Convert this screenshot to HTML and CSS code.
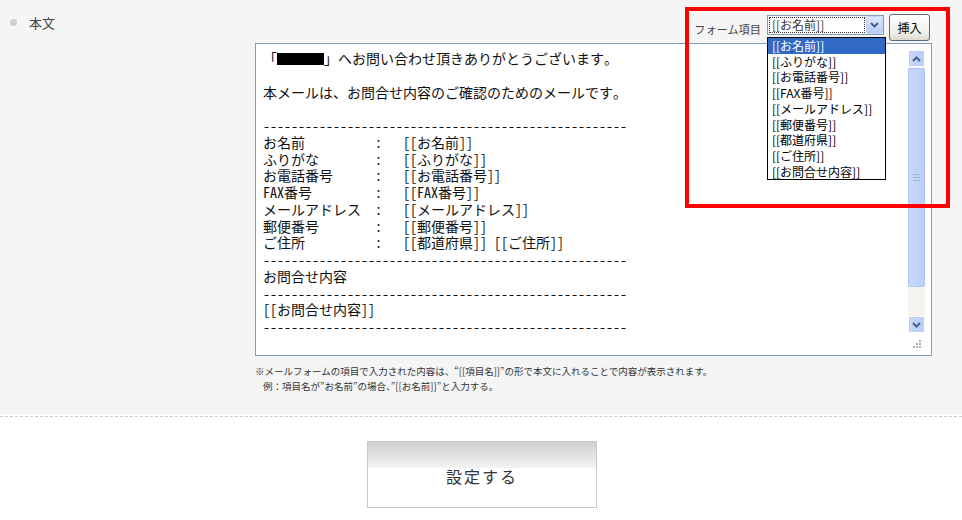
FILE: index.html
```html
<!DOCTYPE html>
<html lang="ja">
<head>
  <meta charset="UTF-8">
  <title>本文設定</title>
  <link rel="stylesheet" href="styles.css">
</head>
<body>

<div class="form-section">
  <div class="form-row">
    <div class="row-label"><span class="dot"></span>本文</div>

    <div class="row-body">
      <div class="toolbar">
        <span class="toolbar-label">フォーム項目</span>
        <div class="select">
          <span class="select-value">[[お名前]]</span>
          <span class="select-arrow">
            <svg width="9" height="6" viewBox="0 0 9 6"><path d="M1 1 L4.5 4.5 L8 1" fill="none" stroke="#4d6185" stroke-width="2"/></svg>
          </span>
          <ul class="select-list">
            <li class="selected">[[お名前]]</li>
            <li>[[ふりがな]]</li>
            <li>[[お電話番号]]</li>
            <li>[[FAX番号]]</li>
            <li>[[メールアドレス]]</li>
            <li>[[郵便番号]]</li>
            <li>[[都道府県]]</li>
            <li>[[ご住所]]</li>
            <li>[[お問合せ内容]]</li>
          </ul>
        </div>
        <button class="insert-btn">挿入</button>
      </div>

      <div class="editor">
        <div class="editor-text"><span class="open">「</span><span class="masked"></span>」へお問い合わせ頂きありがとうございます。

本メールは、お問合せ内容のご確認のためのメールです。

----------------------------------------------------
お名前          :   [[お名前]]
ふりがな        :   [[ふりがな]]
お電話番号      :   [[お電話番号]]
FAX番号         :   [[FAX番号]]
メールアドレス  :   [[メールアドレス]]
郵便番号        :   [[郵便番号]]
ご住所          :   [[都道府県]] [[ご住所]]
----------------------------------------------------
お問合せ内容
----------------------------------------------------
[[お問合せ内容]]
----------------------------------------------------</div>
        <div class="scrollbar">
          <div class="scroll-track">
            <div class="scroll-btn">
              <svg width="9" height="6" viewBox="0 0 9 6"><path d="M1 5 L4.5 1.5 L8 5" fill="none" stroke="#4d6185" stroke-width="2"/></svg>
            </div>
            <div class="scroll-thumb"><span class="grip"></span></div>
            <div class="scroll-rest"></div>
            <div class="scroll-btn">
              <svg width="9" height="6" viewBox="0 0 9 6"><path d="M1 1 L4.5 4.5 L8 1" fill="none" stroke="#4d6185" stroke-width="2"/></svg>
            </div>
          </div>
          <div class="resize-grip">
            <svg width="10" height="10" viewBox="0 0 10 10" fill="#b0b0b0">
              <rect x="7" y="1" width="2" height="2"/>
              <rect x="4" y="4" width="2" height="2"/><rect x="7" y="4" width="2" height="2"/>
              <rect x="1" y="7" width="2" height="2"/><rect x="4" y="7" width="2" height="2"/><rect x="7" y="7" width="2" height="2"/>
            </svg>
          </div>
        </div>
      </div>

      <p class="note">※メールフォームの項目で入力された内容は、“[[項目名]]”の形で本文に入れることで内容が表示されます。</p>
      <p class="note indent">例：項目名が”お名前”の場合、”[[お名前]]”と入力する。</p>
    </div>
  </div>

  <div class="highlight-box"></div>
</div>

<div class="actions">
  <button class="submit-btn">設定する</button>
</div>

</body>
</html>
```

FILE: styles.css
```css
body {
  margin: 0;
  background: #fff;
  font-family: "Noto Sans CJK JP", "Noto Sans", sans-serif;
  color: #333;
}

* {
  box-sizing: border-box;
}

.form-section {
  position: relative;
  border-bottom: 1px dashed #ccc;
  padding-bottom: 2px;
}

.form-row {
  display: flex;
  background: #f5f5f5;
  padding: 14px 30px 20px 10px;
}

.row-label {
  width: 245px;
  display: flex;
  align-items: center;
  height: 16px;
  font-size: 13px;
  color: #444;
}

.dot {
  width: 7px;
  height: 7px;
  border-radius: 50%;
  background: #cfcfcf;
  margin-right: 12px;
}

.row-body {
  width: 677px;
}

/* ツールバー */
.toolbar {
  display: flex;
  justify-content: flex-end;
  align-items: center;
  height: 27px;
  margin-bottom: 2px;
  margin-right: 2px;
}

.toolbar-label {
  font-size: 11.2px;
  color: #444;
  margin-right: 6px;
  padding-top: 2px;
}

.select {
  position: relative;
  width: 117px;
  height: 20px;
  margin-top: 1px;
  border: 1px solid #7f9db9;
  background: #fff;
  display: flex;
  align-items: center;
  margin-right: 5px;
  margin-bottom: 6px;
}

.select-value {
  flex: 1;
  font-size: 12px;
  line-height: 14px;
  margin: 1px;
  padding-left: 2px;
  border: 1px dotted #333;
  height: 16px;
}

.select-arrow {
  width: 17px;
  height: 18px;
  background: linear-gradient(#dde7fc, #b8cbf6);
  border: 1px solid #c3d3fd;
  border-radius: 2px;
  display: flex;
  align-items: center;
  justify-content: center;
}

.select-list {
  position: absolute;
  top: 21px;
  left: -1px;
  width: 119px;
  margin: 0;
  padding: 0;
  list-style: none;
  border: 1px solid #000;
  background: #fff;
  z-index: 10;
}

.select-list li {
  font-size: 12px;
  line-height: 15.7px;
  padding-left: 4px;
  color: #000;
}

.select-list li.selected {
  background: #316ac5;
  color: #fff;
}

.insert-btn {
  width: 41px;
  height: 27px;
  padding: 0;
  font-family: inherit;
  font-size: 12px;
  color: #000;
  border: 1px solid #5a6a7a;
  border-radius: 3px;
  background: linear-gradient(#ffffff, #f0efe9 70%, #dcdad0);
}

/* 本文エディタ */
.editor {
  display: flex;
  height: 313px;
  border: 1px solid #7f9db9;
  background: #fff;
  padding: 6px 6px 6px 7px;
}

.editor-text {
  flex: 1;
  white-space: pre;
  font-family: "Noto Sans Mono CJK JP", "Liberation Mono", monospace;
  font-size: 14px;
  line-height: 16.75px;
  color: #111;
}

.open {
  display: inline-block;
  width: 14px;
}

.masked {
  display: inline-block;
  width: 47px;
  height: 12px;
  background: #000;
  vertical-align: -1px;
}

.scrollbar {
  width: 17px;
  display: flex;
  flex-direction: column;
}

.scroll-track {
  height: 284px;
  display: flex;
  flex-direction: column;
  background: #f4f3ee;
}

.scroll-btn {
  height: 17px;
  background: linear-gradient(90deg, #c9d8fc, #b9cdf9);
  border: 1px solid #fff;
  outline: 1px solid #bccef7;
  outline-offset: -2px;
  border-radius: 2px;
  display: flex;
  align-items: center;
  justify-content: center;
}

.scroll-thumb {
  height: 219px;
  margin-top: 1px;
  background: linear-gradient(90deg, #c8d7fb, #bccffb);
  border: 1px solid #aec4f4;
  border-radius: 2px;
  display: flex;
  align-items: center;
  justify-content: center;
}

.grip {
  width: 7px;
  height: 7px;
  border-top: 1px solid #9fb2dd;
  border-bottom: 1px solid #9fb2dd;
  position: relative;
}

.grip::after {
  content: "";
  position: absolute;
  left: 0;
  right: 0;
  top: 2px;
  border-top: 1px solid #9fb2dd;
}

.scroll-rest {
  flex: 1;
}

.resize-grip {
  height: 16px;
  display: flex;
  align-items: flex-end;
  justify-content: center;
}

/* 注意書き */
.note {
  margin: 0;
  font-size: 9.5px;
  line-height: 15px;
  color: #333;
  white-space: nowrap;
}

.note:first-of-type {
  margin-top: 8px;
}

.note.indent {
  padding-left: 8px;
}

/* 注釈の赤枠 */
.highlight-box {
  position: absolute;
  left: 685px;
  top: 7px;
  width: 265px;
  height: 201px;
  border: 4px solid #f00;
  z-index: 20;
  pointer-events: none;
}

/* 設定ボタン */
.actions {
  display: flex;
  justify-content: center;
  padding: 24px 0 0 2px;
}

.submit-btn {
  width: 230px;
  height: 67px;
  border: 1px solid #c8c8c8;
  background: linear-gradient(#cfcfcf, #f4f4f4 40%, #fff 41%);
  font-family: "Noto Sans CJK JP", sans-serif;
  font-size: 16px;
  letter-spacing: 2px;
  color: #333;
  padding-top: 4px;
}
```
